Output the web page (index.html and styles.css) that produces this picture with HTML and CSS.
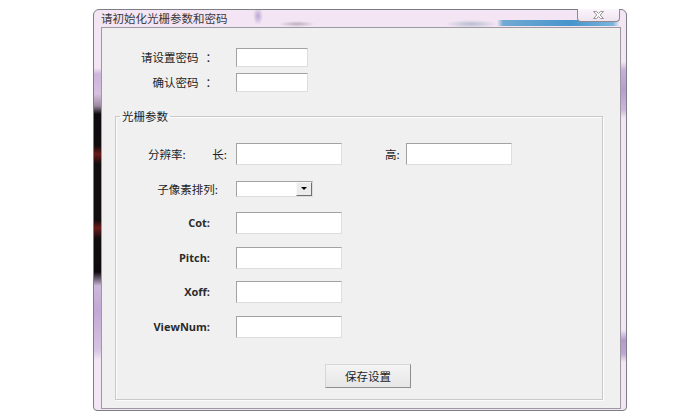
FILE: index.html
```html
<!DOCTYPE html>
<html lang="zh-CN">
<head>
<meta charset="utf-8">
<title>请初始化光栅参数和密码</title>
<link rel="stylesheet" href="styles.css">
</head>
<body>
<div class="window">
  <div class="titlebar">
    <span class="title">请初始化光栅参数和密码</span>
    <div class="close">
      <svg width="13" height="8" viewBox="0 0 13 8"><path d="M1.5 0.5h3l2 2 2-2h3l-3.3 3.5 3.3 3.5h-3l-2-2-2 2h-3l3.3-3.5z" fill="#fafafa" stroke="#8c8c8c" stroke-width="0.9"/></svg>
    </div>
  </div>
  <div class="client">
    <div class="pw-grid">
      <span class="pw-label">请设置密码<span class="colon">：</span></span><input class="field pw" type="text">
      <span class="pw-label">确认密码<span class="colon">：</span></span><input class="field pw" type="text">
    </div>
    <fieldset class="group">
      <legend class="legend">光栅参数</legend>
      <div class="rows">
        <div class="row">
          <div class="cell cell-res"><span>分辨率:</span><span>长:</span></div>
          <input class="field wide" type="text">
          <span class="h-label">高:</span>
          <input class="field wide" type="text">
        </div>
        <div class="row">
          <div class="cell cell-sub">子像素排列:</div>
          <div class="combo"><span class="combo-btn"><span class="tri"></span></span></div>
        </div>
        <div class="row">
          <div class="cell latin">Cot:</div>
          <input class="field wide" type="text">
        </div>
        <div class="row">
          <div class="cell latin">Pitch:</div>
          <input class="field wide" type="text">
        </div>
        <div class="row">
          <div class="cell latin">Xoff:</div>
          <input class="field wide" type="text">
        </div>
        <div class="row">
          <div class="cell latin">ViewNum:</div>
          <input class="field wide" type="text">
        </div>
        <div class="btn-row">
          <button class="btn" type="button">保存设置</button>
        </div>
      </div>
    </fieldset>
  </div>
</div>
</body>
</html>
```
FILE: styles.css
```css
* { box-sizing: border-box; }

html, body {
  margin: 0;
  padding: 0;
  background: #ffffff;
}

body {
  width: 700px;
  height: 420px;
  overflow: hidden;
  font-family: "Noto Sans CJK SC", "Open Sans", sans-serif;
  color: #1e1e1e;
}

.window {
  margin: 9px 0 0 93px;
  width: 534px;
  height: 402px;
  border: 1px solid #7d7d85;
  border-radius: 6px 6px 4px 4px;
  padding: 0 5px 4px 7px;
  display: flex;
  flex-direction: column;
  background-color: #f3e5f3;
  background-image:
    linear-gradient(to bottom,
      transparent 0, transparent 58px,
      #cdb4da 64px, #d6c0e0 84px,
      #9a8aa0 96px, #0e0b0e 104px, #120c0f 136px,
      #6a1a1a 144px, #120d0f 154px, #120d0f 210px,
      #6c1c1c 218px, #110d0f 228px, #0e0b0e 262px,
      #cdb8dc 276px, #c2a8d6 300px, #d6c4e2 340px,
      transparent 350px),
    linear-gradient(to bottom,
      transparent 0, transparent 52px,
      #c7aedb 60px, #b89cd2 80px, #cdb6dd 100px,
      transparent 108px, transparent 320px,
      #b49ad0 330px, #bfa6d6 344px,
      transparent 352px);
  background-size: 7px 100%, 5px 100%;
  background-position: left top, right top;
  background-repeat: no-repeat;
}

.titlebar {
  height: 17px;
  display: flex;
  align-items: flex-start;
  justify-content: space-between;
  background-image:
    radial-gradient(ellipse 5px 9px at 157px 6px, rgba(175, 150, 205, 0.8), transparent),
    radial-gradient(ellipse 18px 3px at 196px 14px, rgba(120, 110, 130, 0.45), transparent),
    radial-gradient(ellipse 26px 4px at 370px 14px, rgba(110, 140, 170, 0.45), transparent),
    linear-gradient(to right, transparent 0, transparent 396px, rgba(70, 150, 200, 0.75) 402px, rgba(50, 140, 200, 0.9) 470px, rgba(70, 160, 210, 0.7) 512px, transparent 518px);
  background-size: 100% 100%, 100% 100%, 100% 100%, 100% 6px;
  background-position: 0 0, 0 0, 0 0, 0 10px;
  background-repeat: no-repeat;
}

.title {
  font-size: 11.5px;
  line-height: 17px;
  color: #3a3a3a;
}

.close {
  margin-top: -1px;
  margin-right: 1px;
  width: 43px;
  height: 13px;
  border: 1px solid #8a8a90;
  border-top: none;
  border-radius: 0 0 4px 4px;
  background: linear-gradient(to bottom, #fbf4fb, #efe4ef);
  display: flex;
  align-items: center;
  justify-content: center;
}

.close svg { display: block; }

.client {
  flex: 1;
  border: 1px solid #9c9aa0;
  background: #f0f0f0;
  padding: 20px 17px 8px 13px;
  display: flex;
  flex-direction: column;
}

.pw-grid {
  display: grid;
  grid-template-columns: 102px 72px;
  column-gap: 19px;
  row-gap: 6px;
  align-items: center;
}

.pw-label {
  font-size: 11.5px;
  text-align: right;
  line-height: 19px;
  white-space: nowrap;
}

.colon { margin-left: 7px; }

.field {
  display: block;
  margin: 0;
  padding: 0;
  height: 19px;
  background: #ffffff;
  border: 1px solid #dedede;
  border-top-color: #a2a2a2;
  border-left-color: #a2a2a2;
  outline: none;
  -webkit-appearance: none;
  appearance: none;
  border-radius: 0;
}

.field.pw { width: 72px; }
.field.wide { width: 106px; height: 22px; }

.group {
  margin: 17px 0 0 0;
  padding: 0 0 11px 0;
  min-width: 0;
  flex: 1;
  border: 1px solid #c9c9c9;
  box-shadow: inset 1px 1px 0 #fcfcfc, 1px 1px 0 #fcfcfc;
}

.legend {
  margin-left: 4px;
  padding: 0 2px;
  font-size: 11.5px;
  line-height: 14px;
  color: #1e1e1e;
}

.rows {
  margin-top: 20px;
  display: flex;
  flex-direction: column;
  gap: 12.5px;
}

.row {
  display: flex;
  align-items: center;
  height: 22px;
}

.cell {
  width: 120px;
  padding-right: 26px;
  text-align: right;
  font-size: 11.5px;
  line-height: 22px;
  flex-shrink: 0;
}

.cell.latin {
  font-family: "Open Sans", "Noto Sans CJK SC", sans-serif;
  font-weight: 700;
  font-size: 11px;
  color: #2a2a2a;
}

.cell-res {
  display: flex;
  justify-content: space-between;
  padding-left: 32px;
  padding-right: 9px;
}

.cell-sub { padding-right: 18px; }

.h-label {
  margin-left: 43px;
  width: 21px;
  font-size: 11.5px;
  line-height: 22px;
}

.combo {
  width: 77px;
  height: 16px;
  background: #ffffff;
  border: 1px solid #dcdcdc;
  border-top-color: #a2a2a2;
  border-left-color: #a2a2a2;
  display: flex;
  justify-content: flex-end;
}

.combo-btn {
  width: 16px;
  height: 14px;
  background: #ececec;
  border: 1px solid #f8f8f8;
  border-right-color: #6e6e6e;
  border-bottom-color: #6e6e6e;
  display: flex;
  align-items: center;
  justify-content: center;
}

.tri {
  width: 0;
  height: 0;
  border-left: 3px solid transparent;
  border-right: 3px solid transparent;
  border-top: 3px solid #000;
}

.btn-row {
  margin-top: 12px;
  padding-left: 209px;
}

.btn {
  width: 86px;
  height: 24px;
  margin: 0;
  padding: 0;
  font-family: "Noto Sans CJK SC", sans-serif;
  font-size: 11.5px;
  color: #1e1e1e;
  background: linear-gradient(to bottom, #f4f4f4, #e6e6e6);
  border: 1px solid #d6d6d6;
  border-right-color: #8e8e8e;
  border-bottom-color: #8e8e8e;
  border-radius: 0;
}
```
